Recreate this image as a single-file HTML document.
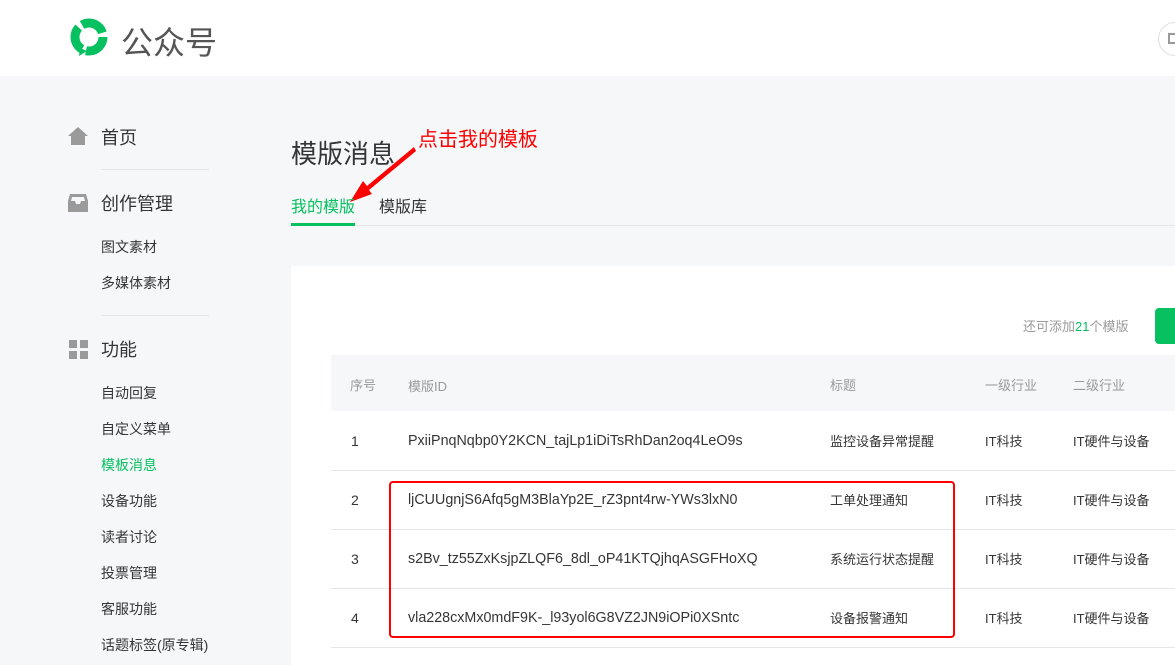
<!DOCTYPE html>
<html><head><meta charset="utf-8"><style>
*{margin:0;padding:0;box-sizing:border-box}
body{width:1175px;height:665px;overflow:hidden;background:#f6f7f9;font-family:"Liberation Sans","Noto Sans CJK SC",sans-serif;color:#353535;position:relative}
.a{position:absolute;white-space:nowrap}
.hd{position:absolute;left:0;top:0;width:1175px;height:76px;background:#fff}
.line{position:absolute;height:1px;background:#e4e6e9}
.sub{font-size:14px;color:#353535}
.id{font-size:14.3px}
</style></head><body>
<div class="hd"></div>
<svg class="a" style="left:67px;top:16px" width="44" height="42" viewBox="0 0 44 42">
<circle cx="22" cy="21" r="14" fill="none" stroke="#07c160" stroke-width="9" stroke-dasharray="25 4.3"/>
<path d="M13 32 L12 40 L20 35 Z" fill="#07c160"/>
</svg>
<div class="a" style="left:121px;top:18px;font-size:32px;color:#555">公众号</div>
<div class="a" style="left:1158px;top:22px;width:34px;height:34px;border:1px solid #ddd;border-radius:50%"></div>
<div class="a" style="left:1168px;top:33px;width:10px;height:11px;border:2px solid #999"></div>

<svg class="a" style="left:67px;top:126px" width="22" height="20" viewBox="0 0 22 20"><path d="M11 1 L21 10 H18 V19 H4 V10 H1 Z" fill="#9a9a9a"/></svg>
<div class="a" style="left:101px;top:124px;font-size:18px">首页</div>
<div class="line" style="left:101px;top:169px;width:108px"></div>
<svg class="a" style="left:67px;top:193px" width="22" height="20" viewBox="0 0 22 20"><path d="M3 1 H19 L21 8 V19 H1 V8 Z M4 8 H8 L9 11 H13 L14 8 H18 L17 4 H5 Z" fill="#9a9a9a" fill-rule="evenodd"/></svg>
<div class="a" style="left:101px;top:190px;font-size:18px">创作管理</div>
<div class="a sub" style="left:101px;top:237px">图文素材</div>
<div class="a sub" style="left:101px;top:273px">多媒体素材</div>
<div class="line" style="left:101px;top:315px;width:108px"></div>
<svg class="a" style="left:69px;top:340px" width="20" height="19"><rect x="0" y="0" width="8" height="8" fill="#9a9a9a"/><rect x="11" y="0" width="8" height="8" fill="#9a9a9a"/><rect x="0" y="11" width="8" height="8" fill="#9a9a9a"/><rect x="11" y="11" width="8" height="8" fill="#9a9a9a"/></svg>
<div class="a" style="left:101px;top:336px;font-size:18px">功能</div>
<div class="a sub" style="left:101px;top:383px">自动回复</div>
<div class="a sub" style="left:101px;top:419px">自定义菜单</div>
<div class="a sub" style="left:101px;top:455px;color:#07c160">模板消息</div>
<div class="a sub" style="left:101px;top:491px">设备功能</div>
<div class="a sub" style="left:101px;top:527px">读者讨论</div>
<div class="a sub" style="left:101px;top:563px">投票管理</div>
<div class="a sub" style="left:101px;top:599px">客服功能</div>
<div class="a sub" style="left:101px;top:635px">话题标签(原专辑)</div>

<div class="a" style="left:291px;top:134px;font-size:26px">模版消息</div>
<div class="a" style="left:418px;top:123px;font-size:20px;color:#f00">点击我的模板</div>
<svg class="a" style="left:340px;top:145px" width="80" height="65"><path d="M74 2 L27 41 L23 36 L10 57 L32 49 L29 45 L76 6 Z" fill="#f00"/></svg>
<div class="a" style="left:291px;top:193px;font-size:16px;color:#07c160">我的模版</div>
<div class="a" style="left:379px;top:193px;font-size:16px">模版库</div>
<div class="line" style="left:291px;top:225px;width:884px"></div>
<div class="a" style="left:291px;top:223px;width:64px;height:3px;background:#07c160"></div>

<div class="a" style="left:291px;top:266px;width:884px;height:399px;background:#fff"></div>
<div class="a" style="left:1023px;top:316px;font-size:13px;color:#9a9a9a">还可添加<span style="color:#07c160">21</span>个模版</div>
<div class="a" style="left:1155px;top:308px;width:30px;height:36px;background:#07c160;border-radius:4px"></div>
<div class="a" style="left:331px;top:355px;width:844px;height:56px;background:#f6f7f9"></div>
<div class="a" style="left:350px;top:375px;font-size:13px;color:#9a9a9a">序号</div>
<div class="a" style="left:408px;top:376px;font-size:13px;color:#9a9a9a">模版ID</div>
<div class="a" style="left:830px;top:375px;font-size:13px;color:#9a9a9a">标题</div>
<div class="a" style="left:985px;top:375px;font-size:13px;color:#9a9a9a">一级行业</div>
<div class="a" style="left:1073px;top:375px;font-size:13px;color:#9a9a9a">二级行业</div>

<div class="line" style="left:331px;top:470px;width:844px"></div>
<div class="line" style="left:331px;top:529px;width:844px"></div>
<div class="line" style="left:331px;top:588px;width:844px"></div>
<div class="line" style="left:331px;top:647px;width:844px"></div>

<div class="a" style="left:351px;top:433px;font-size:14px">1</div>
<div class="a id" style="left:408px;top:433px">PxiiPnqNqbp0Y2KCN_tajLp1iDiTsRhDan2oq4LeO9s</div>
<div class="a" style="left:830px;top:431px;font-size:13px">监控设备异常提醒</div>
<div class="a" style="left:985px;top:431px;font-size:13px">IT科技</div>
<div class="a" style="left:1073px;top:431px;font-size:13px">IT硬件与设备</div>

<div class="a" style="left:351px;top:492px;font-size:14px">2</div>
<div class="a id" style="left:408px;top:492px">ljCUUgnjS6Afq5gM3BlaYp2E_rZ3pnt4rw-YWs3lxN0</div>
<div class="a" style="left:830px;top:490px;font-size:13px">工单处理通知</div>
<div class="a" style="left:985px;top:490px;font-size:13px">IT科技</div>
<div class="a" style="left:1073px;top:490px;font-size:13px">IT硬件与设备</div>

<div class="a" style="left:351px;top:551px;font-size:14px">3</div>
<div class="a id" style="left:408px;top:551px">s2Bv_tz55ZxKsjpZLQF6_8dl_oP41KTQjhqASGFHoXQ</div>
<div class="a" style="left:830px;top:549px;font-size:13px">系统运行状态提醒</div>
<div class="a" style="left:985px;top:549px;font-size:13px">IT科技</div>
<div class="a" style="left:1073px;top:549px;font-size:13px">IT硬件与设备</div>

<div class="a" style="left:351px;top:610px;font-size:14px">4</div>
<div class="a id" style="left:408px;top:610px">vla228cxMx0mdF9K-_l93yol6G8VZ2JN9iOPi0XSntc</div>
<div class="a" style="left:830px;top:608px;font-size:13px">设备报警通知</div>
<div class="a" style="left:985px;top:608px;font-size:13px">IT科技</div>
<div class="a" style="left:1073px;top:608px;font-size:13px">IT硬件与设备</div>

<div class="a" style="left:389px;top:481px;width:566px;height:157px;border:2px solid #f00;border-radius:4px"></div>
</body></html>
